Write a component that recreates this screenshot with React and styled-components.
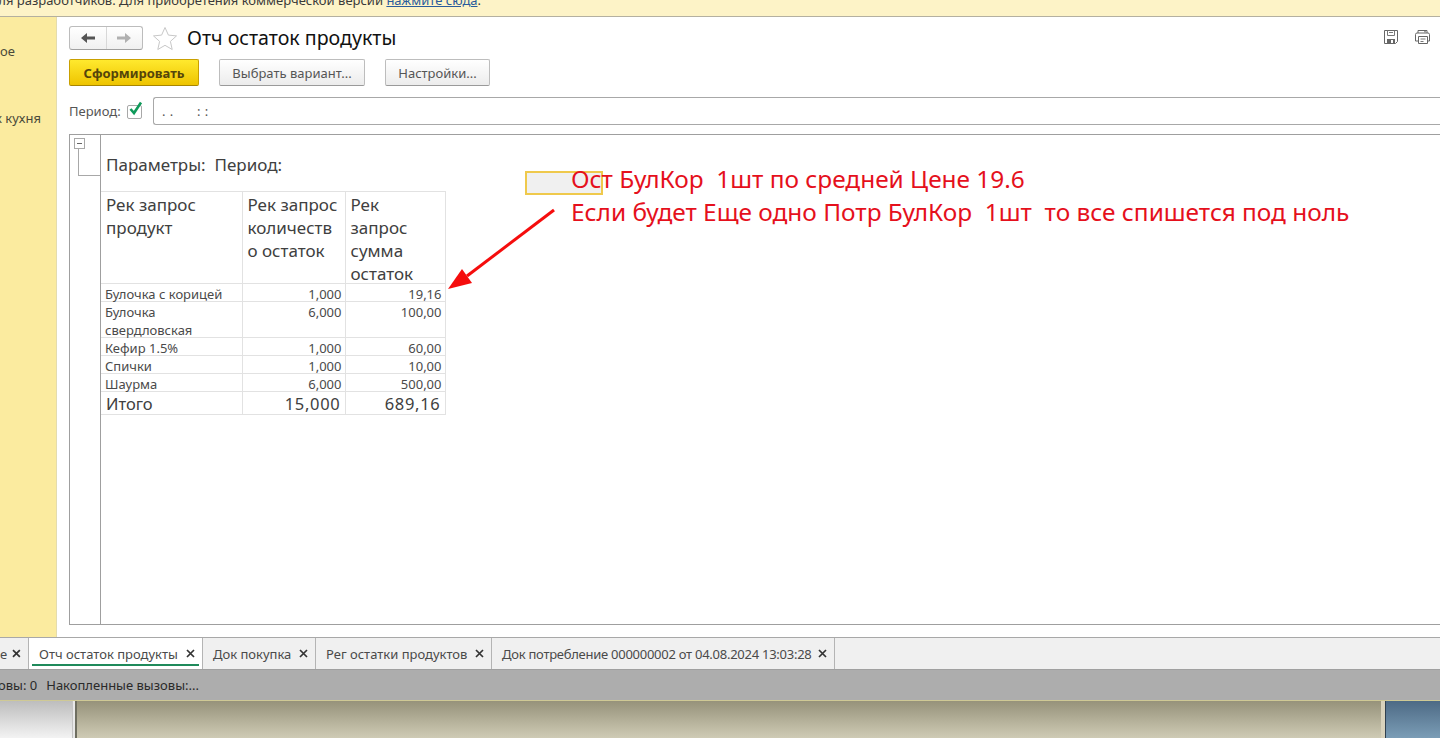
import React from "react";
import styled, { createGlobalStyle } from "styled-components";

const Global = createGlobalStyle`
  html, body { margin: 0; padding: 0; background: #fff; }
  body { font-family: "Noto Sans", "Open Sans", sans-serif; color: #4a4a4a; }
`;
const Page = styled.div`
  position: relative; width: 1440px; height: 738px; overflow: hidden;
  display: flex; flex-direction: column;
`;
const Banner = styled.div`
  height: 16px; flex: none; background: #fdf3c7; border-bottom: 1px solid #b4b0a0;
  overflow: hidden; display: flex;
`;
const BannerClip = styled.div`
  width: 481px; flex: none; overflow: hidden; white-space: nowrap;
  display: flex; justify-content: flex-end; font-size: 13px; line-height: 18px; margin-top: -9px; color: #3a3a3a;
  a { color: #2a5b9c; text-decoration: underline; }
`;
const Main = styled.div`flex: 1; display: flex; min-height: 0;`;
const Sidebar = styled.div`
  width: 56px; flex: none; background: #fbeb9f; border-right: 1px solid #e4dcae;
  overflow: hidden; display: flex; flex-direction: column; padding-top: 25px; font-size: 13px; color: #4a4a3a;
`;
const SideItem = styled.div`
  white-space: nowrap; line-height: 18px; margin-bottom: ${p => p.$mb || 0}px; margin-left: ${p => p.$ml || 0}px;
`;
const Content = styled.div`flex: 1; min-width: 0; padding: 8px 0 12px 12px; overflow: hidden; display: flex; flex-direction: column;`;
const Head = styled.div`height: 26px; display: flex; align-items: center; flex: none;`;
const Nav = styled.div`
  width: 74px; height: 24px; box-sizing: border-box; display: flex; border: 1px solid #bcbcbc; border-bottom-color: #a0a0a0;
  border-radius: 3px; background: linear-gradient(#fff, #f0f0f0);
`;
const NavBtn = styled.div`
  flex: 1; display: flex; align-items: center; justify-content: center;
  & + & { border-left: 1px solid #d8d8d8; }
`;
const Star = styled.svg`margin: 0 9px 0 9px; flex: none;`;
const Title = styled.div`font-size: 19.600px; color: #111; line-height: 26px; white-space: nowrap; flex: 1;`;
const HeadIcons = styled.div`display: flex; gap: 15px; margin: -2px 9px 0 0; align-items: center;`;
const Toolbar = styled.div`display: flex; gap: 20px; margin-top: 8px; height: 27px; flex: none;`;
const Btn = styled.div`
  width: ${p => p.$w}px; box-sizing: border-box; border: 1px solid ${p => p.$primary ? "#c9a000" : "#bdbdbd"};
  border-bottom-color: ${p => p.$primary ? "#a88600" : "#9a9a9a"}; border-radius: 2px;
  background: ${p => p.$primary ? "linear-gradient(#ffe92e, #eec400)" : "linear-gradient(#fff, #ececec)"};
  display: flex; align-items: center; justify-content: center;
  font-size: 13px; white-space: nowrap;
  font-weight: ${p => p.$primary ? 700 : 400}; color: ${p => p.$primary ? "#54450a" : "#555"};
`;
const PeriodRow = styled.div`display: flex; align-items: center; margin-top: 11px; height: 28px; flex: none;`;
const Label = styled.div`font-size: 13px; color: #555; line-height: 28px; white-space: nowrap; width: 58px;`;
const Check = styled.div`
  width: 15px; height: 14px; box-sizing: border-box; border: 1px solid #a8a8a8; border-radius: 2px; position: relative;
  margin-right: 11px; flex: none; margin-top: 1px;
  svg { position: absolute; left: 0; top: -5px; }
`;
const DateInput = styled.div`
  flex: 1; height: 28px; box-sizing: border-box; border: 1px solid #a8a8a8; border-right: 0;
  border-radius: 3px 0 0 3px; font-size: 13px; line-height: 27px; padding-left: 4px; color: #555; white-space: pre; letter-spacing: .5px;
`;
const Report = styled.div`
  flex: 1; margin-top: 9px; border: 1px solid #9f9f9f; border-right: 0; min-height: 0; display: flex;
`;
const Gutter = styled.div`width: 26px; flex: none; border-right: 1px solid #9f9f9f; padding: 3px 0 0 4px;`;
const Minus = styled.div`
  width: 9px; height: 9px; border: 1px solid #a8a8a8; display: flex; align-items: center; justify-content: center;
  &::before { content: ""; width: 5px; height: 1px; background: #666; }
`;
const Elbow = styled.div`width: 21px; height: 26px; margin-left: 4px; border-left: 1px solid #a8a8a8; border-bottom: 1px solid #a8a8a8;`;
const Sheet = styled.div`flex: 1; min-width: 0;`;
const Params = styled.div`font-size: 17px; line-height: 20px; padding: 20px 0 0 5px; height: 36px; white-space: pre; color: #404040;`;
const Table = styled.table`
  border-collapse: collapse; table-layout: fixed; width: 344px;
  td { border: 1px solid #e2e2e2; }
  tr td:first-child { border-left: 0; }
`;
const HCell = styled.td`
  font-size: 17px; line-height: 23px; padding: 0 5px; vertical-align: top; height: 91px; color: #404040;
`;
const HeadText = styled.div`margin: 1px 0 -2px; white-space: nowrap;`;
const Cell = styled.td`
  font-size: 13px; line-height: 18px; padding: 0 ${p => p.$pr || 4}px 0 4px; vertical-align: top; text-align: ${p => p.$r ? "right" : "left"}; color: #4a4a4a;
`;
const CellText = styled.div`margin: 1px 0 -2px;`;
const TotalCell = styled.td`
  font-size: 16.500px; line-height: 20px; height: 20px; padding: 2px ${p => p.$pr || 5}px 0 5px; text-align: ${p => p.$r ? "right" : "left"}; color: #404040;
  letter-spacing: ${p => p.$r ? ".7px" : "0"};
`;
const Tabs = styled.div`
  height: 31px; flex: none; display: flex; background: #f0f0f0; border-top: 1px solid #a8a8a8; overflow: hidden;
`;
const Tab = styled.div`
  flex: none; width: ${p => p.$w}px; box-sizing: border-box; position: relative; display: flex; align-items: center;
  justify-content: space-between; padding: 0 7px 0 10px; border-right: 1px solid #b4b4b4;
  background: ${p => p.$active ? "#fff" : "transparent"}; font-size: 13px; color: #4a4a4a; white-space: nowrap;
  letter-spacing: ${p => p.$tight ? "-.26px" : "0"};
  ${p => p.$active && `&::after { content: ""; position: absolute; left: 3px; right: 3px; bottom: 3px; height: 2px; background: #1f8a5b; }`}
`;
const CutTab = styled(Tab)`overflow: hidden; padding-left: 0; justify-content: flex-start; gap: 5px;`;
const Status = styled.div`
  height: 31px; flex: none; background: #adadad; display: flex; align-items: center; gap: 9px; font-size: 13px; color: #2a2a2a;
  white-space: pre; box-shadow: inset 0 1px 0 #a0a0a0;
`;
const StatusCut = styled.span`margin-left: -2px;`;
const Desktop = styled.div`
  height: 38px; box-sizing: border-box; flex: none; display: grid; grid-template-columns: 72px 5px 1fr 55px; border-top: 1px solid #cfc995;
`;
const DeskLeft = styled.div`background: linear-gradient(#bdbdbd, #f3f3f3);`;
const DeskGap = styled.div`background: #e8e8e8; border-left: 1px solid #c4c4c4; border-right: 2px solid #6e6e60;`;
const DeskMid = styled.div`background: linear-gradient(#96927a, #cfcbb5); border-right: 4px solid #d8d2bc;`;
const DeskRight = styled.div`background: linear-gradient(#4d6a85, #7b9db6); border-left: 1px solid #30404f;`;
const Marker = styled.div`
  position: absolute; left: 525px; top: 171px; width: 78px; height: 24px; box-sizing: border-box;
  background: #f0f0f0; border: 2px solid #efc94c;
`;
const Note = styled.div`
  position: absolute; left: 571px; top: 162px; font-size: 24.400px; line-height: 33px; color: #e5101c; white-space: pre;
`;
const Arrow = styled.svg`position: absolute; left: 440px; top: 200px;`;

const rows = [
  ["Булочка с корицей", "1,000", "19,16"],
  [<>Булочка<br />свердловская</>, "6,000", "100,00"],
  ["Кефир 1.5%", "1,000", "60,00"],
  ["Спички", "1,000", "10,00"],
  ["Шаурма", "6,000", "500,00"],
];
const tabs = [
  ["Отч остаток продукты", 174, true],
  ["Док покупка", 113],
  ["Рег остатки продуктов", 176],
  ["Док потребление 000000002 от 04.08.2024 13:03:28", 343, false, true],
];
const X = () => (
  <svg width="9" height="9" viewBox="0 0 9 9"><path d="M1 1l7 7M8 1L1 8" stroke="#333" strokeWidth="1.7" /></svg>
);

export default function App() {
  return (
    <Page>
      <Global />
      <Banner>
        <BannerClip>
          <span>Версия для разработчиков. Для приобретения коммерческой версии <a>нажмите сюда</a>.</span>
        </BannerClip>
      </Banner>
      <Main>
        <Sidebar>
          <SideItem $mb={49}>ое</SideItem>
          <SideItem $ml={-5}>к кухня</SideItem>
        </Sidebar>
        <Content>
          <Head>
            <Nav>
              <NavBtn>
                <svg width="16" height="12" viewBox="0 0 16 12"><path d="M1 6l6-5v3.500h8v3H7V11z" fill="#555" /></svg>
              </NavBtn>
              <NavBtn>
                <svg width="16" height="12" viewBox="0 0 16 12"><path d="M15 6L9 1v3.500H1v3h8V11z" fill="#b0b0b0" /></svg>
              </NavBtn>
            </Nav>
            <Star width="26" height="25" viewBox="0 0 26 25">
              <path d="M13 1.500l3.400 7.600 8.100.8-6.100 5.500 1.800 8.100-7.200-4.200-7.200 4.200 1.800-8.100-6.100-5.500 8.100-.8z" fill="#fff" stroke="#c8c8c8" />
            </Star>
            <Title>Отч остаток продукты</Title>
            <HeadIcons>
              <svg width="16" height="16" viewBox="0 0 16 16">
                <path d="M1.500 1.500h13v11l-2 2h-11z" fill="none" stroke="#666" />
                <path d="M4.500 1.500v5h7v-5M6 3.500h4" fill="none" stroke="#777" />
                <path d="M4 10h8v4.500H4z" fill="#666" /><path d="M8 11h2v3H8z" fill="#fff" />
              </svg>
              <svg width="17" height="16" viewBox="0 0 17 16">
                <path d="M4 4V1.500h9V4M4 12H1.500V5.500a1.500 1.500 0 0 1 1.500-1.500h11a1.500 1.500 0 0 1 1.500 1.500V12H14" fill="none" stroke="#666" />
                <path d="M4.500 7.500h9v7h-9z" fill="#fff" stroke="#666" />
                <path d="M6.500 10h5M6.500 12.500h3M10 2.800h2" stroke="#777" />
              </svg>
            </HeadIcons>
          </Head>
          <Toolbar>
            <Btn $w={130} $primary>Сформировать</Btn>
            <Btn $w={146}>Выбрать вариант...</Btn>
            <Btn $w={105}>Настройки...</Btn>
          </Toolbar>
          <PeriodRow>
            <Label>Период:</Label>
            <Check>
              <svg width="15" height="15" viewBox="0 0 15 15"><path d="M2.500 8l3.500 4L13 1.500" fill="none" stroke="#0f9a5a" strokeWidth="2.600" /></svg>
            </Check>
            <DateInput>{" . .      : :"}</DateInput>
          </PeriodRow>
          <Report>
            <Gutter>
              <Minus />
              <Elbow />
            </Gutter>
            <Sheet>
              <Params>{"Параметры:  Период:"}</Params>
              <Table>
                <colgroup>
                  <col style={{ width: 141 }} /><col style={{ width: 103 }} /><col style={{ width: 100 }} />
                </colgroup>
                <tbody>
                  <tr>
                    <HCell><HeadText>Рек запрос<br />продукт</HeadText></HCell>
                    <HCell><HeadText>Рек запрос<br />количеств<br />о остаток</HeadText></HCell>
                    <HCell><HeadText>Рек<br />запрос<br />сумма<br />остаток</HeadText></HCell>
                  </tr>
                  {rows.map((r, i) => (
                    <tr key={i}>
                      <Cell><CellText>{r[0]}</CellText></Cell>
                      <Cell $r $pr={3}><CellText>{r[1]}</CellText></Cell>
                      <Cell $r $pr={3}><CellText>{r[2]}</CellText></Cell>
                    </tr>
                  ))}
                  <tr>
                    <TotalCell>Итого</TotalCell><TotalCell $r $pr={4}>15,000</TotalCell><TotalCell $r $pr={4}>689,16</TotalCell>
                  </tr>
                </tbody>
              </Table>
            </Sheet>
          </Report>
        </Content>
      </Main>
      <Tabs>
        <CutTab $w={29}><span>е</span><X /></CutTab>
        {tabs.map(([t, w, a, tight]) => (
          <Tab key={t} $w={w} $active={a} $tight={tight}><span>{t}</span><X /></Tab>
        ))}
      </Tabs>
      <Status><StatusCut>овы: 0</StatusCut><span>Накопленные вызовы:...</span></Status>
      <Desktop>
        <DeskLeft /><DeskGap /><DeskMid /><DeskRight />
      </Desktop>
      <Marker />
      <Note>{"Ост БулКор  1шт по средней Цене 19.6\nЕсли будет Еще одно Потр БулКор  1шт  то все спишется под ноль"}</Note>
      <Arrow width="125" height="100" viewBox="440 200 125 100">
        <path d="M554 210L467 276" stroke="#f50d0d" strokeWidth="3" />
        <path d="M448 289L462 269L472 283z" fill="#f50d0d" />
      </Arrow>
    </Page>
  );
}
